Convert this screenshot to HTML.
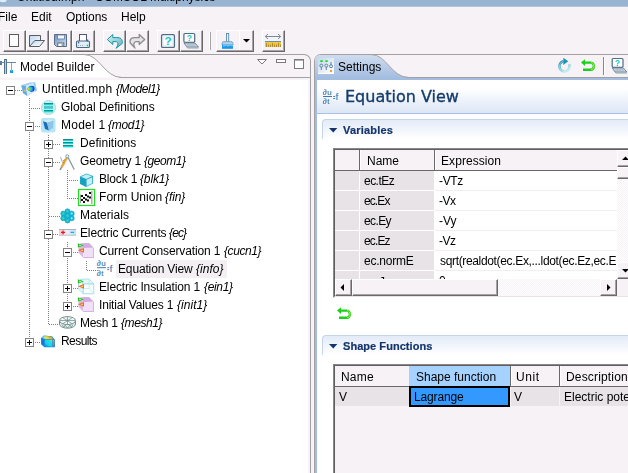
<!DOCTYPE html>
<html><head><meta charset="utf-8"><title>Untitled.mph - COMSOL Multiphysics</title>
<style>
*{box-sizing:border-box;margin:0;padding:0}
html,body{width:628px;height:473px;overflow:hidden;background:#F6F2F6}
body{position:relative;font-family:"Liberation Sans",sans-serif;font-size:12px;color:#000}
.a{position:absolute}
.t{will-change:transform;position:absolute;white-space:nowrap;line-height:14px;height:14px}
.btn{position:absolute;top:30px;height:22px;width:23px;border-top:1px solid #fff;border-left:1px solid #fff;border-right:1px solid #6b686b;border-bottom:1px solid #6b686b;box-shadow:inset -1px -1px 0 #a6a2a6}
svg{position:absolute;overflow:visible}
i{font-style:italic}
.box{position:absolute;width:9px;height:9px;border:1px solid #848284;background:#fff}
.box:before{content:"";position:absolute;left:1px;top:3px;width:5px;height:1px;background:#000}
.box.p:after{content:"";position:absolute;left:3px;top:1px;width:1px;height:5px;background:#000}
.vd{position:absolute;width:1px;background-image:linear-gradient(#808080 50%,transparent 50%);background-size:1px 2px}
.hd{position:absolute;height:1px;background-image:linear-gradient(90deg,#808080 50%,transparent 50%);background-size:2px 1px}
.hdr{position:absolute;background:#F6F2F6;border-bottom:1px solid #696969}
.cs{position:absolute;width:2px;border-left:1px solid #696969;border-right:1px solid #fff}
.gc{position:absolute;background:#E7E3E7}
.sb{position:absolute;background:#F6F2F6;border-top:1px solid #fff;border-left:1px solid #fff;border-right:1px solid #6b686b;border-bottom:1px solid #6b686b;box-shadow:inset -1px -1px 0 #a6a2a6}
.dith{background-color:#fff;background-image:linear-gradient(45deg,#F6F2F6 25%,transparent 25%,transparent 75%,#F6F2F6 75%),linear-gradient(45deg,#F6F2F6 25%,transparent 25%,transparent 75%,#F6F2F6 75%);background-size:2px 2px;background-position:0 0,1px 1px}
</style></head><body>
<!-- title bar -->
<div class="a" style="left:0;top:6px;width:628px;height:1px;background:#B5C7DC"></div><div class="a" style="left:0;top:0;width:628px;height:6px;background:#99B4D1;overflow:hidden"><div class="t" style="left:17px;top:-10px;font-size:12px;letter-spacing:0px">Untitled.mph - COMSOL Multiphysics</div></div>
<!-- menu -->
<div class="t" style="left:-2px;top:10px">File</div>
<div class="t" style="left:31px;top:10px">Edit</div>
<div class="t" style="left:66px;top:10px">Options</div>
<div class="t" style="left:121px;top:10px">Help</div>
<!-- toolbar -->
<div id="tb">
<div class="btn" style="left:3px"></div>
<div class="btn" style="left:26px"></div>
<div class="btn" style="left:49px"></div>
<div class="btn" style="left:72px"></div>
<div class="btn" style="left:103px"></div>
<div class="btn" style="left:126px"></div>
<div class="btn" style="left:157px"></div>
<div class="btn" style="left:180px"></div>
<div class="a" style="left:209px;top:32px;width:1px;height:18px;background:#fff"></div>
<div class="a" style="left:210px;top:32px;width:1px;height:18px;background:#a8a5a8"></div>
<div class="btn" style="left:216px;width:38px"></div>
<div class="a" style="left:239px;top:31px;width:1px;height:19px;background:#fff"></div>
<div class="btn" style="left:262px"></div>
<svg style="left:0;top:28px" width="300" height="26">
<!-- new -->
<rect x="9.5" y="6.5" width="9" height="12" fill="#fff" stroke="#5c5c5c"/>
<!-- open -->
<defs><linearGradient id="fg" x1="0" y1="0" x2="1" y2="1"><stop offset="0" stop-color="#BCD8F4"/><stop offset="1" stop-color="#fff"/></linearGradient>
<linearGradient id="sg" x1="0" y1="0" x2="1" y2="1"><stop offset="0" stop-color="#7090C0"/><stop offset="0.6" stop-color="#A4C4E8"/><stop offset="1" stop-color="#C4E0F8"/></linearGradient>
<linearGradient id="ug" x1="0" y1="0" x2="1" y2="1"><stop offset="0" stop-color="#D8F0F0"/><stop offset="1" stop-color="#58B8C0"/></linearGradient></defs>
<path d="M29.5,18.5 L29.5,7.5 L40.5,7.5 L40.5,12.5" fill="url(#fg)" stroke="#5c5c5c"/>
<path d="M29.5,18.5 L34.8,12.5 L44.5,12.5 L39.5,18.5 Z" fill="url(#fg)" stroke="#5c5c5c"/>
<!-- save -->
<path d="M54.5,6.5 L66.5,6.5 L66.5,18.5 L56.5,18.5 L54.5,16.5 Z" fill="url(#sg)" stroke="#5A6C88"/>
<rect x="57.5" y="7" width="7" height="4" fill="#F0F6FC" stroke="#6C7C98" stroke-width="0.8"/>
<rect x="57.8" y="15" width="6" height="3.5" fill="#fff" stroke="#5c5c5c" stroke-width="0.9"/>
<rect x="61.5" y="16" width="1.5" height="2.3" fill="#8CA8D0"/>
<!-- print -->
<rect x="79.5" y="6.5" width="7" height="7" fill="#fff" stroke="#4c5c6c"/>
<rect x="76.5" y="13" width="13" height="6.5" rx="1.3" fill="#E4EEF8" stroke="#486888" stroke-width="1.1"/>
<rect x="78" y="13.5" width="1.2" height="2" fill="#486888"/><rect x="87" y="11.5" width="1.2" height="2" fill="#486888"/>
<rect x="78" y="17" width="1" height="1" fill="#a8a8a8"/><rect x="80" y="17" width="1" height="1" fill="#a8a8a8"/><rect x="82" y="17" width="1" height="1" fill="#a8a8a8"/><rect x="83.5" y="17" width="3" height="1" fill="#C8F0F8"/>
<rect x="86.7" y="16.7" width="1.5" height="1.5" fill="#18C828"/>
<!-- undo -->
<path d="M107.3,11.5 L112.8,6.5 L112.8,9.6 L118,9.6 C121.5,9.8 122.8,12.5 122.2,15.5 L116,20.3 C118.5,17 118.5,14 116,13.6 L112.8,13.6 L112.8,16.5 Z" fill="url(#ug)" stroke="#1898A8" stroke-width="1" stroke-linejoin="round"/>
<!-- redo -->
<path d="M144.7,11.5 L139.2,6.5 L139.2,9.6 L134,9.6 C130.5,9.8 129.5,12.5 130.2,15 L135,20 C133,17 133.5,14 136,13.6 L139.2,13.6 L139.2,16.5 Z" fill="#E4E2E4" stroke="#8E8C8E" stroke-width="1.3" stroke-linejoin="round"/>
<!-- help -->
<rect x="161.6" y="6.6" width="12.8" height="12.8" rx="1.2" fill="#fff" stroke="#4E6C84" stroke-width="1.3"/>
<rect x="162.9" y="7.9" width="10.2" height="10.2" rx="0.8" fill="none" stroke="#D4DEE8" stroke-width="1"/>
<text x="168" y="17.3" text-anchor="middle" font-family="Liberation Sans,sans-serif" font-weight="bold" font-size="11.5" fill="#10C8C8">?</text>
<!-- help laptop -->
<rect x="183.9" y="5.5" width="10.8" height="8.8" rx="1" fill="#fff" stroke="#4E6C84" stroke-width="1.2"/>
<text x="189.3" y="13.2" text-anchor="middle" font-family="Liberation Sans,sans-serif" font-weight="bold" font-size="8.5" fill="#10C8C8">?</text>
<path d="M184,15 L195,15 L198.5,19 L187,19 Z" fill="#D8E0E8" stroke="#6C8498" stroke-width="1"/>
<path d="M185,16.5 L187.5,20 L198.5,20" fill="none" stroke="#90A4B4" stroke-width="1"/>
<path d="M187,17 L195.5,17" stroke="#8498A8" stroke-width="0.8"/>
<!-- brush -->
<rect x="226.5" y="5.5" width="2.2" height="8.5" fill="#E8F0F8" stroke="#5C8CB0" stroke-width="0.9"/>
<path d="M222,15.5 Q222,13.6 224,13.6 L231,13.6 Q233,13.6 233,15.5 L233,17 L222,17 Z" fill="#B4D0E8" stroke="#6C9CC0" stroke-width="0.8"/>
<rect x="222" y="16.6" width="11" height="4.2" fill="#1898E8"/>
<path d="M224,16.6 L224,18.5 M226,16.6 L226,18 M228,16.6 L228,18.5 M230,16.6 L230,18 M232,16.6 L232,18.3" stroke="#D8F0FC" stroke-width="0.9"/>
<!-- dropdown arrow -->
<path d="M243,11 L250,11 L246.5,14.6 Z" fill="#000"/>
<!-- ruler -->
<path d="M265.5,8.5 L280.5,8.5 M268,6 L265.3,8.5 L268,11 M278,6 L280.7,8.5 L278,11" fill="none" stroke="#7090A0" stroke-width="1"/>
<rect x="265" y="13" width="16" height="1" fill="#7090A0"/>
<rect x="265" y="14" width="16" height="5" fill="#ECC848"/>
<path d="M266.5,15 L266.5,19 M268.5,16.5 L268.5,19 M270.5,16.5 L270.5,19 M272.5,15 L272.5,19 M274.5,16.5 L274.5,19 M276.5,16.5 L276.5,19 M278.5,15 L278.5,19 M280.5,16.5 L280.5,19" stroke="#B08820" stroke-width="0.9"/>
</svg>
</div>
<!-- left panel -->
<div id="lp">
<div class="a" style="left:0;top:54px;width:311px;height:419px;border-top:1px solid #a3a0a3;border-right:1px solid #a3a0a3;border-top-right-radius:7px"></div>
<div class="a" style="left:119px;top:77px;width:191px;height:1px;background:#a3a0a3"></div>
<div class="a" style="left:0;top:80px;width:308px;height:393px;background:#fff"></div>
<svg style="left:0;top:54px" width="130" height="24"><path d="M0,0.5 L84,0.5 C100,0.5 104,23.5 122,23.5 L0,23.5 Z" fill="#fff"/><path d="M0,0.5 L84,0.5 C100,0.5 104,23.5 122,23.5" fill="none" stroke="#a3a0a3"/></svg>
<div class="t" style="left:20px;top:60px;letter-spacing:0.1px">Model Builder</div>
</div>
<!-- tree -->
<div id="tree">
<div class="a" style="left:116px;top:260px;width:111px;height:18px;background:#F3EFF3"></div>
<div class="vd" style="left:29px;top:98px;height:24px"></div>
<div class="vd" style="left:29px;top:132px;height:206px"></div>
<div class="vd" style="left:48px;top:135px;height:5px"></div>
<div class="vd" style="left:48px;top:149px;height:9px"></div>
<div class="vd" style="left:48px;top:167px;height:63px"></div>
<div class="vd" style="left:48px;top:239px;height:86px"></div>
<div class="vd" style="left:67px;top:170px;height:29px"></div>
<div class="vd" style="left:67px;top:242px;height:6px"></div>
<div class="vd" style="left:67px;top:258px;height:26px"></div>
<div class="vd" style="left:67px;top:294px;height:8px"></div>
<div class="vd" style="left:86px;top:261px;height:10px"></div>
<div class="box" style="left:6px;top:86px"></div>
<div class="hd" style="top:90px;left:15px;width:7px"></div>
<svg style="left:22px;top:82px" width="16" height="16"><polygon points="-0.7,3.2 7,0.8 13,0.2 14.8,8.6 5.3,13.9 1.1,11.3" fill="#BFDDF6"/>
<polygon points="-0.7,3.2 7,0.8 13,0.2 3.9,3.9" fill="#A4D0F2"/>
<polygon points="-0.7,3.2 3.9,3.9 5.3,13.9 1.1,11.3" fill="#6AAAE2"/>
<polygon points="3.9,3.9 13,0.2 14.8,8.6 5.3,13.9" fill="#D4EAFA"/>
<polygon points="11.5,1 13,0.2 14.8,8.6 13.2,9.4" fill="#8CC8F4"/>
<ellipse cx="9.6" cy="6.7" rx="3" ry="3" fill="#1838C8"/>
<ellipse cx="8.6" cy="6.8" rx="2.6" ry="2.5" fill="#1890E8"/>
<ellipse cx="7.8" cy="6.9" rx="2.2" ry="2.1" fill="#20D0D0"/>
<ellipse cx="7" cy="7" rx="1.7" ry="1.7" fill="#50D850"/>
<ellipse cx="6.3" cy="7.1" rx="1.2" ry="1.2" fill="#F4D428"/>
<ellipse cx="5.8" cy="7.2" rx="0.6" ry="0.6" fill="#F09020"/>
<circle cx="3" cy="8.6" r="1" fill="#D8C840"/></svg>
<div class="t" style="left:41.7px;top:82px;letter-spacing:0.26px">Untitled.mph</div>
<div class="t" style="left:116.0px;top:82px;letter-spacing:-0.43px"><i>{Model1}</i></div>
<div class="hd" style="top:108px;left:31px;width:10px"></div>
<svg style="left:41px;top:100px" width="16" height="16"><circle cx="7.5" cy="7.5" r="7" fill="#C6EEEE" stroke="#A6E0E0" stroke-width="1"/>
<rect x="3" y="3" width="9" height="1" fill="#0E8E8E"/><rect x="3" y="4" width="9" height="1.3" fill="#18D8D8"/>
<rect x="3" y="6.5" width="9" height="1" fill="#0E8E8E"/><rect x="3" y="7.5" width="9" height="1.3" fill="#18D8D8"/>
<rect x="3" y="10" width="9" height="1" fill="#0E8E8E"/><rect x="3" y="11" width="9" height="1.3" fill="#18D8D8"/></svg>
<div class="t" style="left:60.8px;top:100px;letter-spacing:-0.02px">Global Definitions</div>
<div class="box" style="left:25px;top:122px"></div>
<div class="hd" style="top:126px;left:35px;width:6px"></div>
<svg style="left:41px;top:118px" width="16" height="16"><rect x="0" y="0" width="14.5" height="14.5" rx="2.5" fill="#B4E6F6"/>
<polygon points="2,3 6,4.5 8,12.5 4,11" fill="#1F6FB8"/>
<polygon points="6,4.5 12.5,2.5 12,10 8,12.5" fill="#8CC4EA"/>
<polygon points="2,3 8,1.5 12.5,2.5 6,4.5" fill="#D4ECFA"/></svg>
<div class="t" style="left:60.5px;top:118px;letter-spacing:0.25px">Model 1</div>
<div class="t" style="left:107.5px;top:118px;letter-spacing:-0.3px"><i>{mod1}</i></div>
<div class="box p" style="left:44px;top:140px"></div>
<div class="hd" style="top:144px;left:53px;width:7px"></div>
<svg style="left:60px;top:136px" width="16" height="16"><rect x="3" y="3" width="10" height="1" fill="#0E8E8E"/><rect x="3" y="4" width="10" height="1.2" fill="#18D8D8"/>
<rect x="3" y="6" width="10" height="1" fill="#0E8E8E"/><rect x="3" y="7" width="10" height="1.2" fill="#18D8D8"/>
<rect x="3" y="9" width="10" height="1" fill="#0E8E8E"/><rect x="3" y="10" width="10" height="1.4" fill="#18D8D8"/></svg>
<div class="t" style="left:80.0px;top:136px;letter-spacing:0.03px">Definitions</div>
<div class="box" style="left:44px;top:158px"></div>
<div class="hd" style="top:162px;left:53px;width:7px"></div>
<svg style="left:60px;top:154px" width="16" height="16"><path d="M0.5,3 Q1.5,8 5,10.5" fill="none" stroke="#8FA3A8" stroke-width="0.9"/>
<path d="M7.5,2.5 L14.3,15.5" stroke="#7E9AA0" stroke-width="1.3" fill="none"/>
<path d="M7,3.5 L1.6,13.2" stroke="#E8A838" stroke-width="2.4" fill="none"/>
<path d="M1.6,13.2 L0,16" stroke="#708890" stroke-width="1.4" fill="none"/>
<path d="M5.3,5.5 L3,6.8 M4.2,8 L2.2,9" stroke="#9A7A40" stroke-width="0.7"/>
<circle cx="7.3" cy="2.3" r="1.5" fill="#fff" stroke="#7E9AA0" stroke-width="1"/></svg>
<div class="t" style="left:79.5px;top:154px;letter-spacing:-0.18px">Geometry 1</div>
<div class="t" style="left:143.7px;top:154px;letter-spacing:-0.45px"><i>{geom1}</i></div>
<div class="hd" style="top:180px;left:69px;width:10px"></div>
<svg style="left:79px;top:172px" width="16" height="16"><polygon points="1,4.5 7.5,1.5 14,4 14,11.5 7,15 1,12" fill="#1FA8C8"/>
<polygon points="2,4.8 7.5,2.3 13,4.3 7.3,7" fill="#C4EEF2"/>
<polygon points="7.6,7.8 13.2,5.2 13.2,11.2 7.6,14" fill="#C8F0F4"/>
<polygon points="1.8,5.8 6.6,7.8 6.6,14 1.8,11.6" fill="#18A0C0"/></svg>
<div class="t" style="left:98.7px;top:172px;letter-spacing:-0.17px">Block 1</div>
<div class="t" style="left:139.9px;top:172px;letter-spacing:-0.14px"><i>{blk1}</i></div>
<div class="hd" style="top:198px;left:69px;width:10px"></div>
<svg style="left:79px;top:190px" width="16" height="16"><rect x="-0.5" y="-0.5" width="16" height="16" fill="#fff" stroke="#22DD22" stroke-width="1.2"/>
<path d="M12.8,1 L12.8,14" stroke="#9a9a9a" stroke-width="1.2"/>
<g fill="#111"><rect x="2" y="5" width="2" height="2"/><rect x="6" y="4" width="2" height="2"/><rect x="10" y="2" width="2" height="2"/>
<rect x="4" y="7" width="2" height="2"/><rect x="8" y="5.5" width="2" height="2"/><rect x="2" y="9" width="2" height="2"/>
<rect x="6" y="8.5" width="2" height="2"/><rect x="10" y="6.5" width="2" height="2"/><rect x="4" y="11" width="2" height="2"/><rect x="8" y="9.5" width="2" height="2"/></g>
<path d="M1.5,4.5 L1.5,13" stroke="#555" stroke-width="0.6"/></svg>
<div class="t" style="left:98.7px;top:190px;letter-spacing:0.06px">Form Union</div>
<div class="t" style="left:165.4px;top:190px;letter-spacing:-0.1px"><i>{fin}</i></div>
<div class="hd" style="top:216px;left:49px;width:11px"></div>
<svg style="left:60px;top:208px" width="16" height="16"><g fill="#18B8E0" stroke="#1098C8" stroke-width="0.5"><circle cx="7.5" cy="3.3" r="2.6"/><circle cx="3.3" cy="5.6" r="2.6"/><circle cx="11.7" cy="5.6" r="2.6"/><circle cx="3.3" cy="10.2" r="2.6"/><circle cx="11.7" cy="10.2" r="2.6"/><circle cx="7.5" cy="12.4" r="2.6"/><circle cx="7.5" cy="7.8" r="2.6"/></g>
<g fill="#48E848"><circle cx="7.5" cy="3.3" r="1"/><circle cx="3.3" cy="5.6" r="1"/><circle cx="3.3" cy="10.2" r="1"/><circle cx="7.5" cy="12.4" r="1"/><circle cx="7.5" cy="7.8" r="1"/></g>
<g fill="#90F0F8"><circle cx="11.7" cy="5.6" r="1"/><circle cx="11.7" cy="10.2" r="1"/></g></svg>
<div class="t" style="left:79.5px;top:208px;letter-spacing:0.04px">Materials</div>
<div class="box" style="left:44px;top:230px"></div>
<div class="hd" style="top:234px;left:53px;width:7px"></div>
<svg style="left:60px;top:226px" width="16" height="16"><defs><linearGradient id="ecg" x1="0" x2="1" y1="0" y2="0"><stop offset="0" stop-color="#F8C8D0"/><stop offset="0.5" stop-color="#F0ECF4"/><stop offset="1" stop-color="#B8E0F8"/></linearGradient></defs>
<rect x="-1" y="3" width="17" height="6.6" fill="url(#ecg)"/><rect x="-1" y="3" width="17" height="1" fill="#A8B4C0"/><rect x="-1" y="8.8" width="17" height="0.9" fill="#B8C4D0"/>
<path d="M1,6.4 L5,6.4 M3,4.4 L3,8.4" stroke="#E01818" stroke-width="1.2"/><path d="M10.5,6.4 L14,6.4" stroke="#18B0E8" stroke-width="1.3"/></svg>
<div class="t" style="left:79.5px;top:226px;letter-spacing:-0.13px">Electric Currents</div>
<div class="t" style="left:169.2px;top:226px;letter-spacing:-0.87px"><i>{ec}</i></div>
<div class="box" style="left:63px;top:248px"></div>
<div class="hd" style="top:252px;left:73px;width:6px"></div>
<svg style="left:79px;top:244px" width="16" height="16"><polygon points="1.5,-0.8 10.1,-1 14.8,3.8 4.2,4" fill="#D2ACE0"/>
<polygon points="1.5,-0.8 4.2,4 4.2,13.8 -0.5,8.7 -0.5,2" fill="#D9B8E6"/>
<rect x="4.2" y="4" width="10.6" height="9.8" fill="#F1E0F7"/>
<path d="M14.5,4 L14.5,13.5 L4.2,13.5" fill="none" stroke="#CDA6DF" stroke-width="0.8"/>
<polygon points="-1.1,-0.8 5,1.4 -1.1,3.6" fill="#22C022"/><polygon points="0.2,0.5 2.8,1.4 0.2,2.3" fill="#B8F4B8"/>
<polygon points="5,4 5,8.7 -1.1,6.35" fill="#F07010"/><polygon points="3.9,5.4 3.9,7.3 1.4,6.35" fill="#FFD4A4"/></svg>
<div class="t" style="left:98.7px;top:244px;letter-spacing:-0.12px">Current Conservation 1</div>
<div class="t" style="left:224.0px;top:244px;letter-spacing:-0.42px"><i>{cucn1}</i></div>
<div class="hd" style="top:270px;left:87px;width:11px"></div>
<svg style="left:98px;top:262px" width="16" height="16"><g font-family="Liberation Sans,sans-serif" fill="#3E78AC" stroke="#3E78AC" stroke-width="0.15"><text x="-1.3" y="3.7" font-size="8" letter-spacing="0.5">∂u</text><text x="-1.3" y="13.6" font-size="8" letter-spacing="0.5">∂t</text><rect x="-1" y="5.2" width="9" height="1" stroke="none"/><rect x="9.2" y="5.3" width="2" height="0.9" stroke="none"/><rect x="9.2" y="7.2" width="2" height="0.9" stroke="none"/><text x="11.8" y="9.7" font-size="9">f</text></g></svg>
<div class="t" style="left:118.0px;top:262px;letter-spacing:-0.15px">Equation View</div>
<div class="t" style="left:196.0px;top:262px;letter-spacing:0.02px"><i>{info}</i></div>
<div class="box p" style="left:63px;top:284px"></div>
<div class="hd" style="top:288px;left:73px;width:6px"></div>
<svg style="left:79px;top:280px" width="16" height="16"><polygon points="1.5,-0.8 10.1,-1 14.8,3.8 4.2,4" fill="#E4F6FA" stroke="#A0DCE8" stroke-width="0.8"/>
<polygon points="1.5,-0.8 4.2,4 4.2,13.8 -0.5,8.7 -0.5,2" fill="#ECFAFC" stroke="#A0DCE8" stroke-width="0.8"/>
<rect x="4.2" y="4" width="10.6" height="9.8" fill="#FAFEFF" stroke="#A0DCE8" stroke-width="0.9"/>
<path d="M10.1,-1 L10.1,8.5 L14.8,13.8 M10.1,8.5 L-0.5,8.7" fill="none" stroke="#B8E6EE" stroke-width="0.7"/>
<polygon points="-1.1,-0.8 5,1.4 -1.1,3.6" fill="#22C022"/><polygon points="0.2,0.5 2.8,1.4 0.2,2.3" fill="#B8F4B8"/>
<polygon points="5,4 5,8.7 -1.1,6.35" fill="#F07010"/><polygon points="3.9,5.4 3.9,7.3 1.4,6.35" fill="#FFD4A4"/></svg>
<div class="t" style="left:98.9px;top:280px;letter-spacing:-0.14px">Electric Insulation 1</div>
<div class="t" style="left:204.0px;top:280px;letter-spacing:-0.34px"><i>{ein1}</i></div>
<div class="box p" style="left:63px;top:302px"></div>
<div class="hd" style="top:306px;left:73px;width:6px"></div>
<svg style="left:79px;top:298px" width="16" height="16"><polygon points="1.5,-0.8 10.1,-1 14.8,3.8 4.2,4" fill="#D2ACE0"/>
<polygon points="1.5,-0.8 4.2,4 4.2,13.8 -0.5,8.7 -0.5,2" fill="#D9B8E6"/>
<rect x="4.2" y="4" width="10.6" height="9.8" fill="#F1E0F7"/>
<path d="M14.5,4 L14.5,13.5 L4.2,13.5" fill="none" stroke="#CDA6DF" stroke-width="0.8"/>
<polygon points="-1.1,-0.8 5,1.4 -1.1,3.6" fill="#22C022"/><polygon points="0.2,0.5 2.8,1.4 0.2,2.3" fill="#B8F4B8"/>
<polygon points="5,4 5,8.7 -1.1,6.35" fill="#F07010"/><polygon points="3.9,5.4 3.9,7.3 1.4,6.35" fill="#FFD4A4"/></svg>
<div class="t" style="left:98.9px;top:298px;letter-spacing:-0.19px">Initial Values 1</div>
<div class="t" style="left:177.0px;top:298px;letter-spacing:0.03px"><i>{init1}</i></div>
<div class="hd" style="top:324px;left:49px;width:11px"></div>
<svg style="left:60px;top:316px" width="16" height="16"><ellipse cx="7.5" cy="8" rx="8" ry="4.2" fill="#E8F0F0" stroke="#688686" stroke-width="0.9"/>
<rect x="-0.5" y="4.8" width="16" height="3.2" fill="#E8F0F0"/>
<path d="M-0.5,4.8 L-0.5,8 M15.5,4.8 L15.5,8" stroke="#688686" stroke-width="0.9"/>
<ellipse cx="7.5" cy="4.6" rx="8" ry="4" fill="#F4F8F8" stroke="#688686" stroke-width="0.9"/>
<path d="M0,4.5 L15,4.5 M3,1.8 L12,7.6 M12,1.8 L3,7.6 M7.5,0.8 L7.5,8.5 M2,8.6 L4,11.4 M5,9 L7.5,12 L10,9 M13,8.6 L11,11.4 M4,11.4 L5,9 M11,11.4 L10,9" fill="none" stroke="#688686" stroke-width="0.7"/></svg>
<div class="t" style="left:79.8px;top:316px;letter-spacing:-0.28px">Mesh 1</div>
<div class="t" style="left:121.2px;top:316px;letter-spacing:-0.43px"><i>{mesh1}</i></div>
<div class="box p" style="left:25px;top:338px"></div>
<div class="hd" style="top:342px;left:35px;width:6px"></div>
<svg style="left:41px;top:334px" width="16" height="16"><defs><linearGradient id="rg1" x1="0" y1="1" x2="1" y2="0"><stop offset="0" stop-color="#1878E8"/><stop offset="0.35" stop-color="#18D0F0"/><stop offset="0.75" stop-color="#20E0E0"/><stop offset="1" stop-color="#90F080"/></linearGradient>
<linearGradient id="rg2" x1="0" y1="0" x2="1" y2="0"><stop offset="0" stop-color="#60D8F0"/><stop offset="0.4" stop-color="#F8E030"/><stop offset="1" stop-color="#F88020"/></linearGradient>
<linearGradient id="rg3" x1="0" y1="0" x2="1" y2="1"><stop offset="0" stop-color="#F8C020"/><stop offset="1" stop-color="#E83018"/></linearGradient></defs><g transform="translate(0,1) scale(0.96,0.87)">
<polygon points="0,3.5 3,0.5 11.5,1.5 14.5,5.5 14.5,14 3.5,14 0,10.5" fill="#1890E0"/>
<polygon points="1,3.3 3.3,1.2 11,2 13,4.8 4,4.6" fill="url(#rg2)"/>
<polygon points="4,5.5 11.5,5.5 11.5,13.2 4,13.2" fill="url(#rg1)"/>
<polygon points="12.3,5.5 13.8,6 13.8,13 12.3,13.2" fill="url(#rg3)"/>
<polygon points="0.8,4.2 3.2,5.5 3.2,12.8 0.8,10.2" fill="#2070D8"/></g></svg>
<div class="t" style="left:60.7px;top:334px;letter-spacing:-0.57px">Results</div>
</div>
<!-- /tree -->
<!-- right panel -->
<div id="rp">
<div class="a" style="left:314px;top:54px;width:320px;height:419px;border-top:1px solid #a3a0a3;border-left:1px solid #a3a0a3;border-top-left-radius:7px"></div>
<div class="a" style="left:315px;top:77px;width:313px;height:1px;background:#a3a0a3"></div>
<div class="a" style="left:315px;top:78px;width:313px;height:395px;background:#A3BDE0"></div>
<div class="a" style="left:317px;top:80px;width:311px;height:393px;background:#fff"></div>
<svg style="left:315px;top:54px" width="110" height="26"><defs><linearGradient id="tg" x1="0" y1="0" x2="0" y2="1"><stop offset="0" stop-color="#CFDCEF"/><stop offset="1" stop-color="#A3BDE0"/></linearGradient></defs><path d="M0,6 Q0,1 6,1 L56,1 C72,1 76,23.5 94,23.5 L94,24 L0,24 Z" fill="url(#tg)"/><path d="M56,0.5 C72,0.5 76,23.5 94,23.5" fill="none" stroke="#a3a0a3"/></svg>
<div class="t" style="left:338px;top:60px">Settings</div>
<div class="a" style="left:317px;top:80px;width:311px;height:33px;background:linear-gradient(#fff 0%,#fff 25%,#DCE6F6 100%)"></div>
<div class="a" style="left:317px;top:113px;width:311px;height:1px;background:#A9C1E2"></div>
<div class="t" style="left:345px;top:87px;font-family:'DejaVu Sans',sans-serif;font-size:16px;line-height:20px;height:20px;color:#163C6C;-webkit-text-stroke:0.35px #163C6C;letter-spacing:0px">Equation View</div>
<!-- section 1 -->
<div class="a" style="left:322px;top:119px;width:320px;height:20px;border-top:1px solid #C5D5EC;border-left:1px solid #C5D5EC;border-top-left-radius:4px;background:linear-gradient(#E3EBF8,#fff)"></div>
<svg style="left:329px;top:128px" width="9" height="5"><path d="M0,0 L8.4,0 L4.2,4.6 Z" fill="#15356B"/></svg>
<div class="t" style="left:343px;top:123px;font-size:11px;font-weight:bold;color:#15356B;-webkit-text-stroke:0.2px #15356B;letter-spacing:0.2px">Variables</div>
<!-- section 2 -->
<div class="a" style="left:322px;top:335px;width:320px;height:20px;border-top:1px solid #C5D5EC;border-left:1px solid #C5D5EC;border-top-left-radius:4px;background:linear-gradient(#E3EBF8,#fff)"></div>
<svg style="left:329px;top:344px" width="9" height="5"><path d="M0,0 L8.4,0 L4.2,4.6 Z" fill="#15356B"/></svg>
<div class="t" style="left:343px;top:339px;font-size:11px;font-weight:bold;color:#15356B;-webkit-text-stroke:0.2px #15356B;letter-spacing:0.05px">Shape Functions</div>

<!-- table 1 -->
<div id="t1">
<div class="a" style="left:333px;top:148px;width:300px;height:150px;border-top:1px solid #8a878a;border-left:1px solid #8a878a;border-bottom:1px solid #fff"></div>
<div class="a" style="left:334px;top:149px;width:300px;height:148px;border-top:1px solid #615e61;border-left:1px solid #615e61;border-bottom:1px solid #E7E3E7;background:#fff"></div>
<div class="hdr" style="left:335px;top:150px;width:282px;height:21px"></div>
<div class="cs" style="left:359px;top:150px;height:20px"></div>
<div class="cs" style="left:434px;top:150px;height:20px"></div>
<div class="t" style="left:367px;top:154px">Name</div>
<div class="t" style="left:441.4px;top:154px;letter-spacing:0.07px">Expression</div>
<div class="a" style="left:335px;top:171px;width:282px;height:108px;overflow:hidden">
<div class="gc" style="left:0;top:0px;width:24px;height:19px"></div><div class="gc" style="left:25px;top:0px;width:74px;height:19px"></div><div class="a" style="left:100px;top:19px;width:182px;height:1px;background:#F0EEF0"></div><div class="t" style="left:29.3px;top:3px;letter-spacing:-0.54px">ec.tEz</div><div class="t" style="left:104px;top:3px;letter-spacing:-0.37px">-VTz</div>
<div class="gc" style="left:0;top:20px;width:24px;height:19px"></div><div class="gc" style="left:25px;top:20px;width:74px;height:19px"></div><div class="a" style="left:100px;top:39px;width:182px;height:1px;background:#F0EEF0"></div><div class="t" style="left:29.3px;top:23px;letter-spacing:-0.9px">ec.Ex</div><div class="t" style="left:104px;top:23px;letter-spacing:-0.5px">-Vx</div>
<div class="gc" style="left:0;top:40px;width:24px;height:19px"></div><div class="gc" style="left:25px;top:40px;width:74px;height:19px"></div><div class="a" style="left:100px;top:59px;width:182px;height:1px;background:#F0EEF0"></div><div class="t" style="left:29.3px;top:43px;letter-spacing:-0.6px">ec.Ey</div><div class="t" style="left:104px;top:43px;letter-spacing:0px">-Vy</div>
<div class="gc" style="left:0;top:60px;width:24px;height:19px"></div><div class="gc" style="left:25px;top:60px;width:74px;height:19px"></div><div class="a" style="left:100px;top:79px;width:182px;height:1px;background:#F0EEF0"></div><div class="t" style="left:29.3px;top:63px;letter-spacing:-0.85px">ec.Ez</div><div class="t" style="left:104px;top:63px;letter-spacing:-0.5px">-Vz</div>
<div class="gc" style="left:0;top:80px;width:24px;height:19px"></div><div class="gc" style="left:25px;top:80px;width:74px;height:19px"></div><div class="a" style="left:100px;top:99px;width:182px;height:1px;background:#F0EEF0"></div><div class="t" style="left:29.3px;top:83px;letter-spacing:-0.23px">ec.normE</div><div class="t" style="left:104.6px;top:83px;letter-spacing:-0.34px">sqrt(realdot(ec.Ex,...ldot(ec.Ez,ec.E</div>
<div class="gc" style="left:0;top:100px;width:24px;height:19px"></div><div class="gc" style="left:25px;top:100px;width:74px;height:19px"></div><div class="a" style="left:100px;top:119px;width:182px;height:1px;background:#F0EEF0"></div><div class="t" style="left:29.3px;top:104px;letter-spacing:-0.3px">ec.Jex</div><div class="t" style="left:104px;top:103px;letter-spacing:0px">0</div>
</div>
<!-- vscroll -->
<div class="a dith" style="left:617px;top:150px;width:16px;height:129px"></div>
<div class="sb" style="left:617px;top:150px;width:16px;height:17px"></div>
<svg style="left:622px;top:156px" width="7" height="4"><path d="M0,4 L7,4 L3.5,0.5 Z" fill="#000"/></svg>
<div class="sb" style="left:617px;top:167px;width:16px;height:12px"></div>
<div class="sb" style="left:617px;top:262px;width:16px;height:17px"></div>
<svg style="left:622px;top:269px" width="7" height="4"><path d="M0,0 L7,0 L3.5,3.5 Z" fill="#000"/></svg>
<!-- hscroll -->
<div class="a dith" style="left:335px;top:279px;width:282px;height:17px"></div>
<div class="a" style="left:617px;top:279px;width:16px;height:17px;background:#F6F2F6"></div>
<div class="sb" style="left:335px;top:279px;width:17px;height:17px"></div>
<svg style="left:340px;top:284px" width="4" height="7"><path d="M4,0 L4,7 L0.5,3.5 Z" fill="#000"/></svg>
<div class="sb" style="left:352px;top:279px;width:146px;height:17px"></div>
<div class="sb" style="left:600px;top:279px;width:17px;height:17px"></div>
<svg style="left:607px;top:284px" width="4" height="7"><path d="M0,0 L0,7 L3.5,3.5 Z" fill="#000"/></svg>
</div>

<!-- table 2 -->
<div id="t2">
<div class="a" style="left:333px;top:364px;width:300px;height:120px;border-top:1px solid #8a878a;border-left:1px solid #8a878a"></div>
<div class="a" style="left:334px;top:365px;width:300px;height:120px;border-top:1px solid #615e61;border-left:1px solid #615e61;background:#F6F2F6"></div>
<div class="hdr" style="left:335px;top:366px;width:300px;height:21px"></div>
<div class="a" style="left:409px;top:366px;width:101px;height:20px;background:#A6D2FF"></div>
<div class="cs" style="left:510px;top:366px;height:20px"></div>
<div class="cs" style="left:559px;top:366px;height:20px"></div>
<div class="t" style="left:341.3px;top:370px;letter-spacing:0.2px">Name</div>
<div class="t" style="left:416px;top:370px">Shape function</div>
<div class="t" style="left:516px;top:370px;letter-spacing:0.6px">Unit</div>
<div class="t" style="left:565.5px;top:370px;letter-spacing:0.17px">Description</div>
<div class="gc" style="left:335px;top:387px;width:74px;height:19px"></div>
<div class="gc" style="left:511px;top:387px;width:48px;height:19px"></div>
<div class="gc" style="left:560px;top:387px;width:70px;height:19px"></div>
<div class="a" style="left:409px;top:386px;width:101px;height:21px;border:2px solid #000;background:#3399FF"></div>
<div class="t" style="left:339px;top:390px">V</div>
<div class="t" style="left:414px;top:390px;letter-spacing:-0.15px">Lagrange</div>
<div class="t" style="left:514px;top:390px">V</div>
<div class="t" style="left:564.4px;top:390px">Electric potential</div>
</div>
</div>

<!-- misc icons -->
<svg id="mi" style="left:0;top:0" width="628" height="473">
<defs>
<linearGradient id="sig" x1="0" y1="0" x2="1" y2="1"><stop offset="0" stop-color="#C4D8EC"/><stop offset="0.7" stop-color="#EEF4FA"/><stop offset="1" stop-color="#fff"/></linearGradient>
<linearGradient id="rfg" x1="0" y1="0" x2="0.6" y2="1"><stop offset="0" stop-color="#1490B4"/><stop offset="1" stop-color="#B4E8EE"/></linearGradient>
</defs>
<ellipse cx="3" cy="0" rx="3.6" ry="2.2" fill="#DCEEF8"/>
<!-- model builder crane -->
<rect x="0" y="61" width="2" height="4" fill="#5A7890"/>
<rect x="0" y="62" width="16" height="1" fill="#6888A0"/>
<rect x="4" y="59" width="3" height="15" fill="#B8CCDC"/><rect x="4" y="59" width="1" height="15" fill="#54748C"/><rect x="6" y="59" width="1" height="15" fill="#54748C"/><rect x="4" y="59" width="3" height="1" fill="#54748C"/>
<rect x="11" y="63" width="1" height="7" fill="#88A8C0"/>
<rect x="10" y="70" width="3" height="3" fill="#1898E8"/><rect x="11" y="70" width="1" height="1" fill="#90D0F8"/>
<!-- panel buttons -->
<path d="M257.5,59.5 L266.5,59.5 L262,64 Z" fill="#fff" stroke="#7c7a7c" stroke-width="1"/>
<rect x="276.5" y="59.5" width="9" height="3" fill="#fff" stroke="#7c7a7c"/>
<rect x="294.5" y="59.5" width="9" height="9" fill="#fff" stroke="#7c7a7c"/><rect x="295" y="60" width="8" height="1" fill="#b4b2b4"/>
<!-- settings icon -->
<rect x="318" y="58" width="16" height="16" fill="url(#sig)"/><rect x="318" y="73" width="16" height="1" fill="#fff"/>
<rect x="320.3" y="60.3" width="2.4" height="1.7" fill="#18D818"/><rect x="325.3" y="60.3" width="2.4" height="1.7" fill="#18D818"/>
<g fill="none" stroke="#5C86A0" stroke-width="1"><circle cx="321.3" cy="65.6" r="1.5"/><path d="M321.3,67 L321.3,70"/><circle cx="326.3" cy="65.6" r="1.5"/><path d="M326.3,67 L326.3,70"/><circle cx="331" cy="66.2" r="1.5"/><path d="M331,62 L331,65"/></g>
<rect x="330" y="70" width="2" height="2" fill="#F8A018"/>
<!-- refresh -->
<path d="M569.2,64.3 A5.1,5.1 0 1,1 563.4,61.3" fill="none" stroke="url(#rfg)" stroke-width="2.5"/>
<path d="M569.2,64.3 A5.1,5.1 0 1,1 563.4,61.3" fill="none" stroke="#fff" stroke-width="0.6" opacity="0.6"/>
<path d="M563.3,57.7 L568.3,61.3 L563.3,64.9 Z" fill="#1C94B6"/>
<!-- green undo (toolbar) -->
<g id="gu1" transform="translate(581,59.2)"><path d="M0,3.4 L4,0 L4,2.2 L10,2.2 C15.4,2.2 15.4,11.8 10,11.8 L2,11.8 L2,9.4 L9.8,9.4 C12.3,9.4 12.3,4.6 9.8,4.6 L4,4.6 L4,6.8 Z" fill="#18D018"/><path d="M10,3.4 C13.9,3.4 13.9,10.6 10,10.6" fill="none" stroke="#C8F020" stroke-width="0.9"/></g>
<!-- green undo (below table) -->
<g transform="translate(337,307.2)"><path d="M0,3.4 L4,0 L4,2.2 L10,2.2 C15.4,2.2 15.4,11.8 10,11.8 L2,11.8 L2,9.4 L9.8,9.4 C12.3,9.4 12.3,4.6 9.8,4.6 L4,4.6 L4,6.8 Z" fill="#18D018"/><path d="M10,3.4 C13.9,3.4 13.9,10.6 10,10.6" fill="none" stroke="#C8F020" stroke-width="0.9"/></g>
<!-- separator -->
<rect x="603" y="57" width="1" height="18" fill="#8a878a"/><rect x="604" y="57" width="1" height="18" fill="#fff"/>
<!-- help laptop right -->
<g transform="translate(428.3,53)">
<rect x="183.9" y="5.5" width="10.8" height="8.8" rx="1" fill="#fff" stroke="#4E6C84" stroke-width="1.2"/>
<text x="189.3" y="13.2" text-anchor="middle" font-family="Liberation Sans,sans-serif" font-weight="bold" font-size="8.5" fill="#10C8C8">?</text>
<path d="M184,15 L195,15 L198.5,19 L187,19 Z" fill="#D8E0E8" stroke="#6C8498" stroke-width="1"/>
<path d="M185,16.5 L187.5,20 L198.5,20" fill="none" stroke="#90A4B4" stroke-width="1"/>
<path d="M187,17 L195.5,17" stroke="#8498A8" stroke-width="0.8"/>
</g>
<!-- equation view header icon -->
<g transform="translate(324,90.8)"><g font-family="Liberation Sans,sans-serif" fill="#3E78AC" stroke="#3E78AC" stroke-width="0.15"><text x="-1.3" y="3.7" font-size="8" letter-spacing="0.5">∂u</text><text x="-1.3" y="13.6" font-size="8" letter-spacing="0.5">∂t</text><rect x="-1" y="5.2" width="9" height="1" stroke="none"/><rect x="9.2" y="5.3" width="2" height="0.9" stroke="none"/><rect x="9.2" y="7.2" width="2" height="0.9" stroke="none"/><text x="11.8" y="9.7" font-size="9">f</text></g></g>
</svg>
</body></html>
